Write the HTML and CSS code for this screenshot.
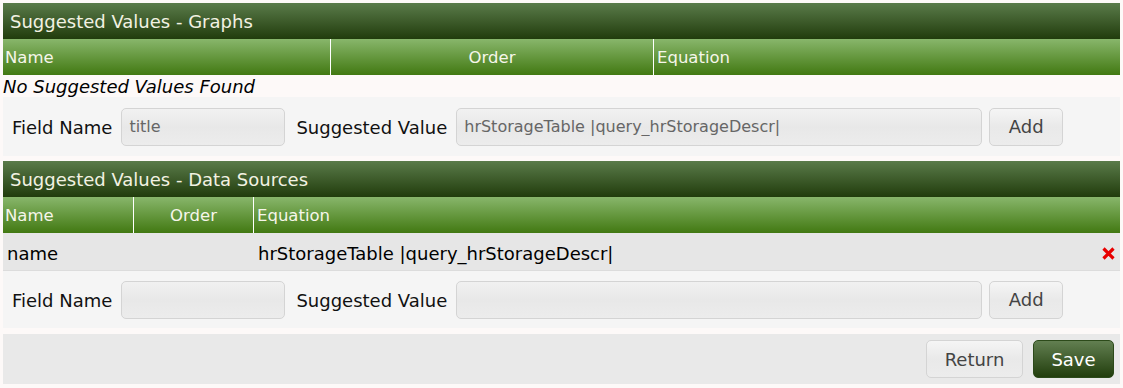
FILE: index.html
```html
<!DOCTYPE html>
<html>
<head>
<meta charset="utf-8">
<link rel="stylesheet" href="styles.css">
</head>
<body>
<div class="page">
  <section class="panel">
    <div class="title">Suggested Values - Graphs</div>
    <div class="thead graphs">
      <div class="th">Name</div>
      <div class="th center">Order</div>
      <div class="th">Equation</div>
    </div>
    <div class="empty">No Suggested Values Found</div>
    <div class="form first">
      <label class="lbl">Field Name</label>
      <input class="inp small" value="title">
      <label class="lbl">Suggested Value</label>
      <input class="inp wide" value="hrStorageTable |query_hrStorageDescr|">
      <button class="btn">Add</button>
    </div>
  </section>

  <section class="panel">
    <div class="title">Suggested Values - Data Sources</div>
    <div class="thead ds">
      <div class="th">Name</div>
      <div class="th center">Order</div>
      <div class="th">Equation</div>
    </div>
    <div class="row ds">
      <div class="td">name</div>
      <div class="td"></div>
      <div class="td">hrStorageTable |query_hrStorageDescr|</div>
      <div class="td del"><svg width="13" height="13" viewBox="0 0 13 13"><path d="M1.5 1.5 L11.5 11.5 M11.5 1.5 L1.5 11.5" stroke="#e80000" stroke-width="3.2" stroke-linecap="butt"/></svg></div>
    </div>
    <div class="form">
      <label class="lbl">Field Name</label>
      <input class="inp small" value="">
      <label class="lbl">Suggested Value</label>
      <input class="inp wide" value="">
      <button class="btn">Add</button>
    </div>
  </section>

  <div class="footer">
    <button class="btn ret">Return</button>
    <button class="btn save">Save</button>
  </div>
</div>
</body>
</html>
```

FILE: styles.css
```css
html, body {
  margin: 0;
  padding: 0;
  background: #fdf9f8;
}
body {
  padding: 3px 3px 0 3px;
  font-family: "DejaVu Sans", Verdana, sans-serif;
  font-size: 18px;
  color: #000;
}
.page {
  display: flex;
  flex-direction: column;
  gap: 5px;
}
.panel {
  display: flex;
  flex-direction: column;
}
.title {
  box-sizing: border-box;
  height: 36px;
  line-height: 35px;
  padding: 1px 0 0 7px;
  background: linear-gradient(#5a7b4a, #213c0c);
  color: #f2f2e2;
  font-size: 18px;
}
.thead {
  display: grid;
  height: 36px;
  background: linear-gradient(#88b66b, #427912);
  color: #f6f6ea;
}
.thead.graphs { grid-template-columns: 327px 323px 1fr; }
.thead.ds { grid-template-columns: 130px 120px 1fr; }
.th {
  box-sizing: border-box;
  line-height: 34px;
  padding: 2px 0 0 2px;
  font-size: 16.5px;
}
.th + .th { border-left: 1px solid #ffffff; padding-left: 3px; }
.th.center { text-align: center; padding-left: 0; }
.empty {
  box-sizing: border-box;
  height: 22px;
  line-height: 20px;
  padding-top: 2px;
  font-style: italic;
  font-size: 18px;
}
.form {
  display: flex;
  align-items: center;
  height: 57px;
  background: #f5f5f5;
  padding-left: 9px;
}
.form.first { height: 59px; }
.lbl {
  font-size: 18px;
  color: #111;
  margin-right: 9px;
  padding-top: 1px;
}
.inp {
  box-sizing: border-box;
  height: 38px;
  border: 1px solid #d4d4d4;
  border-radius: 5px;
  background: linear-gradient(#f1f1f1, #e8e8e8 50%, #ececec);
  font-family: "DejaVu Sans", sans-serif;
  font-size: 16px;
  color: #666;
  padding: 0 7px;
  outline: none;
}
.inp.small { width: 164px; margin-right: 11px; }
.inp.wide { width: 526px; margin-right: 7px; }
.btn {
  box-sizing: border-box;
  height: 38px;
  border: 1px solid #d4d4d4;
  border-radius: 5px;
  background: linear-gradient(#f5f5f5, #e9e9e9 50%, #ececec);
  font-family: "DejaVu Sans", sans-serif;
  font-size: 18px;
  color: #444;
  padding: 0;
}
.form .btn { width: 74px; }
.row {
  display: grid;
  height: 38px;
  box-sizing: border-box;
  padding-top: 3px;
  background: #e6e6e6;
  border-bottom: 1px solid #dcdcdc;
  align-items: center;
}
.row.ds { grid-template-columns: 130px 121px 1fr 24px; }
.td {
  padding-left: 4px;
  font-size: 18px;
  color: #000;
}
.td.del {
  padding: 0;
  display: flex;
  justify-content: center;
}
.footer {
  margin-top: 1px;
  height: 50px;
  background: #e9e9e9;
  display: flex;
  align-items: center;
  justify-content: flex-end;
  gap: 10px;
  padding-right: 6px;
}
.btn.ret { width: 97px; }
.btn.save {
  width: 81px;
  border: 1px solid #2c4a1a;
  background: linear-gradient(#627f51, #223e0d);
  color: #fff;
}
```
